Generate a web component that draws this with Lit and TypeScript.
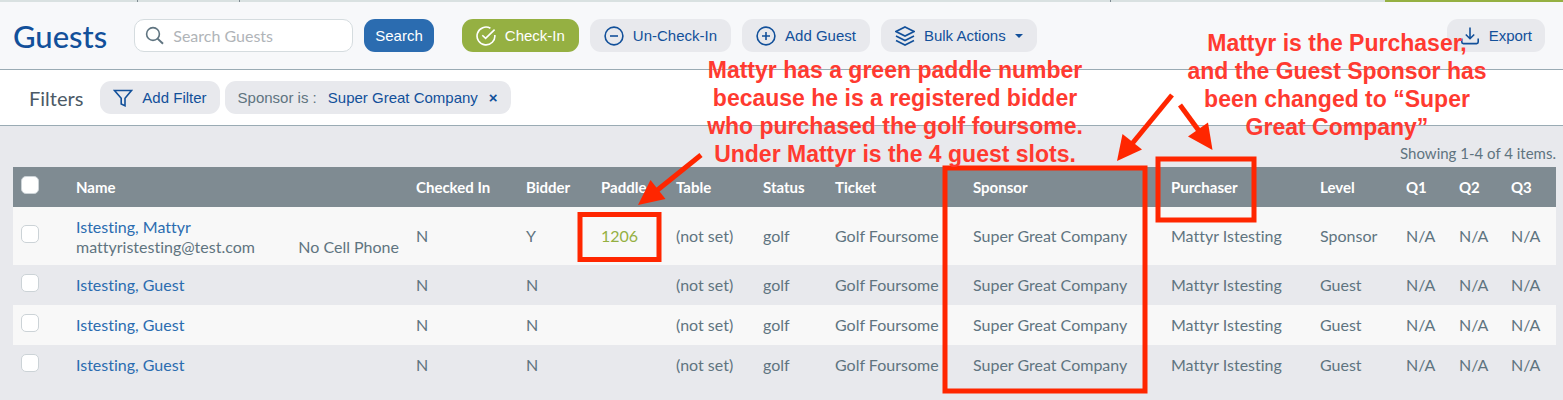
import { LitElement, html, css, svg } from "lit";
import { customElement, state } from "lit/decorators.js";

interface Column {
  label: string;
  width: number;
}

interface Guest {
  name: string;
  email?: string;
  phone?: string;
  bidder: string;
  paddle: string;
  level: string;
}

const COLUMNS: Column[] = [
  { label: "Name", width: 340 },
  { label: "Checked In", width: 110 },
  { label: "Bidder", width: 75 },
  { label: "Paddle", width: 75 },
  { label: "Table", width: 87 },
  { label: "Status", width: 72 },
  { label: "Ticket", width: 138 },
  { label: "Sponsor", width: 198 },
  { label: "Purchaser", width: 149 },
  { label: "Level", width: 86 },
  { label: "Q1", width: 53 },
  { label: "Q2", width: 52 },
  { label: "Q3", width: 53 },
];

const GUESTS: Guest[] = [
  {
    name: "Istesting, Mattyr",
    email: "mattyristesting@test.com",
    phone: "No Cell Phone",
    bidder: "Y",
    paddle: "1206",
    level: "Sponsor",
  },
  { name: "Istesting, Guest", bidder: "N", paddle: "", level: "Guest" },
  { name: "Istesting, Guest", bidder: "N", paddle: "", level: "Guest" },
  { name: "Istesting, Guest", bidder: "N", paddle: "", level: "Guest" },
];

const ICONS = {
  search: svg`<circle cx="8" cy="8" r="6.4" /><path d="M12.6 12.6 18 17.8" stroke-width="2" />`,
  check: svg`<path d="M18.8 9A8.9 8.9 0 1 1 14.4 2.3" /><path d="M6.3 9.2 9.6 12.4 18.6 3.6" />`,
  minus: svg`<circle cx="10" cy="10" r="8.9" /><path d="M6 10h8" />`,
  plus: svg`<circle cx="10" cy="10" r="8.9" /><path d="M6 10h8M10 6v8" />`,
  layers: svg`<path d="M10 1 19 5.5 10 10 1 5.5Z" /><path d="M1 10 10 14.5 19 10" /><path d="M1 14.5 10 19 19 14.5" />`,
  funnel: svg`<path d="M1.5 2.5h17L12 10.3v7.5L8.2 16v-5.7Z" />`,
  download: svg`<path d="M10 1.5v11M5.8 8.5 10 12.7 14.2 8.5M1.8 12.5V16a1.6 1.6 0 0 0 1.6 1.6h13.2a1.6 1.6 0 0 0 1.6-1.6v-3.5" />`,
};

@customElement("app-root")
export class AppRoot extends LitElement {
  static styles = css`
    :host {
      display: block;
      position: relative;
      min-height: 100vh;
      overflow: hidden;
      background: #e8e9ed;
      color: #5f7480;
      font: 16px/20px Lato, sans-serif;
      font-variant-ligatures: none;
    }
    * {
      box-sizing: border-box;
    }
    .strip {
      display: flex;
      height: 2px;
      background: #d9e1e1;
    }
    .tab {
      border-right: 1px solid #7f8b92;
    }
    .tab-a {
      width: 138px;
    }
    .tab-b {
      width: 102px;
    }
    .tab-c {
      width: 871px;
    }
    .tab-active {
      width: 178px;
      margin-left: auto;
      background: #95b042;
    }
    .toolbar {
      display: flex;
      align-items: center;
      height: 68px;
      padding: 0 18px 0 13px;
      background: #f7f8fa;
      border-bottom: 1px solid #9aabb4;
    }
    h1 {
      margin: 0 27px 0 0;
      font-size: 31px;
      line-height: 40px;
      font-weight: 500;
      color: #12509a;
    }
    .icon {
      width: 20px;
      height: 20px;
      flex: none;
      fill: none;
      stroke: currentColor;
      stroke-width: 1.6;
    }
    .search {
      display: flex;
      align-items: center;
      gap: 8px;
      width: 219px;
      height: 33px;
      padding: 0 10px;
      border: 1px solid #d5dcdf;
      border-radius: 10px;
      background: #fff;
    }
    .search input {
      flex: 1;
      min-width: 0;
      padding: 0;
      border: 0;
      outline: 0;
      background: none;
      color: #5f7480;
      font: inherit;
    }
    .search input::placeholder {
      color: #b0b4b8;
      opacity: 1;
    }
    .btn {
      display: flex;
      align-items: center;
      gap: 9px;
      height: 33px;
      padding: 0 13px;
      border: 0;
      border-radius: 11px;
      background: #e8e9ed;
      color: #12509a;
      font: 15px/20px "Liberation Sans", Arial, sans-serif;
      white-space: nowrap;
    }
    .btn-primary {
      margin-left: 11px;
      padding: 0 11px;
      background: #2b6cb0;
      color: #fff;
    }
    .btn-green {
      background: #95b042;
      color: #fff;
    }
    .actions {
      display: flex;
      gap: 11px;
      margin-left: 28px;
    }
    .actions .btn {
      padding: 0 14px;
    }
    .chip {
      gap: 11px;
    }
    .export {
      margin-left: auto;
    }
    .caret {
      border: 4px solid transparent;
      border-top-color: currentColor;
      border-bottom: 0;
    }
    .filters {
      display: flex;
      align-items: center;
      gap: 5px;
      height: 56px;
      padding: 0 29px;
      background: #fff;
      border-bottom: 1px solid #9aabb4;
    }
    h2 {
      margin: 0 12px 0 0;
      font-size: 20px;
      line-height: 24px;
      font-weight: 400;
      color: #4b5a66;
    }
    .chip-label {
      color: #5f7480;
    }
    .chip-remove {
      font-weight: 700;
    }
    .summary {
      margin: 0;
      padding: 17px 7px 4px;
      font-size: 15px;
      text-align: right;
    }
    .grid {
      padding: 0 7px 0 13px;
    }
    table {
      width: 100%;
      table-layout: fixed;
      border-collapse: collapse;
    }
    th,
    td {
      height: 40px;
      padding: 0 0 0 8px;
      text-align: left;
      vertical-align: middle;
      white-space: nowrap;
    }
    thead tr {
      background: #7f8b92;
      color: #fff;
    }
    th {
      font-weight: 700;
      font-size: 15px;
    }
    tbody tr:nth-child(odd) {
      background: #f8f8f8;
    }
    tbody tr:first-child td {
      height: 58px;
    }
    .name {
      padding-top: 10px;
      vertical-align: top;
    }
    .check {
      width: 55px;
      padding-bottom: 5px;
    }
    .check input {
      display: block;
      appearance: none;
      width: 18px;
      height: 18px;
      margin: 0;
      border: 1px solid #ccd3d7;
      border-radius: 5px;
      background: #fff;
    }
    .check input:checked {
      background: #2b6cb0;
    }
    .contact {
      display: flex;
      justify-content: space-between;
      padding-right: 9px;
    }
    a {
      color: #2b6cb0;
      text-decoration: none;
    }
    .paddle {
      color: #95b042;
    }
    .notes {
      position: absolute;
      top: 0;
      left: 0;
      pointer-events: none;
    }
    .note {
      position: absolute;
      margin: 0;
      color: #ff3a30;
      font: 700 23px/28px "Liberation Sans", Arial, sans-serif;
      text-align: center;
      white-space: nowrap;
    }
    .note-paddle {
      top: 56px;
      left: 695px;
      width: 400px;
    }
    .note-sponsor {
      top: 29px;
      left: 1137px;
      width: 400px;
    }
    .marks {
      display: block;
      fill: #ff2600;
      stroke: #ff2600;
    }
    .marks rect {
      fill: none;
      stroke-width: 5;
    }
    .marks line {
      stroke-width: 5;
    }
    .marks polygon {
      stroke: none;
    }
  `;

  @state() private query = "";

  private icon(name: keyof typeof ICONS) {
    return html`<svg class="icon" viewBox="0 0 20 20" aria-hidden="true">${ICONS[name]}</svg>`;
  }

  private onQuery(e: Event) {
    this.query = (e.target as HTMLInputElement).value;
  }

  private row(g: Guest) {
    return html`<tr>
      <td class="check"><input type="checkbox" aria-label=${`Select ${g.name}`} /></td>
      <td class="name">
        <a href="#">${g.name}</a>
        ${g.email
          ? html`<div class="contact"><span>${g.email}</span><span>${g.phone}</span></div>`
          : ""}
      </td>
      <td>N</td>
      <td>${g.bidder}</td>
      <td class="paddle">${g.paddle}</td>
      <td>(not set)</td>
      <td>golf</td>
      <td>Golf Foursome</td>
      <td>Super Great Company</td>
      <td>Mattyr Istesting</td>
      <td>${g.level}</td>
      <td>N/A</td>
      <td>N/A</td>
      <td>N/A</td>
    </tr>`;
  }

  render() {
    return html`
      <div class="strip">
        <span class="tab tab-a"></span>
        <span class="tab tab-b"></span>
        <span class="tab tab-c"></span>
        <span class="tab-active"></span>
      </div>
      <header class="toolbar">
        <h1>Guests</h1>
        <label class="search">
          ${this.icon("search")}
          <input
            type="text"
            aria-label="Search Guests"
            placeholder="Search Guests"
            .value=${this.query}
            @input=${this.onQuery}
          />
        </label>
        <button class="btn btn-primary">Search</button>
        <div class="actions">
          <button class="btn btn-green">${this.icon("check")}Check-In</button>
          <button class="btn">${this.icon("minus")}Un-Check-In</button>
          <button class="btn">${this.icon("plus")}Add Guest</button>
          <button class="btn">${this.icon("layers")}Bulk Actions<span class="caret"></span></button>
        </div>
        <button class="btn export">${this.icon("download")}Export</button>
      </header>
      <section class="filters">
        <h2>Filters</h2>
        <button class="btn">${this.icon("funnel")}Add Filter</button>
        <button class="btn chip" aria-label="Remove filter Sponsor is Super Great Company">
          <span class="chip-label">Sponsor is :</span><span>Super Great Company</span
          ><span class="chip-remove">×</span>
        </button>
      </section>
      <p class="summary">Showing 1-4 of 4 items.</p>
      <main class="grid">
        <table>
          <thead>
            <tr>
              <th class="check"><input type="checkbox" aria-label="Select all guests" /></th>
              ${COLUMNS.map((c) => html`<th style="width:${c.width}px">${c.label}</th>`)}
            </tr>
          </thead>
          <tbody>
            ${GUESTS.map((g) => this.row(g))}
          </tbody>
        </table>
      </main>
      <div class="notes">
        <svg class="marks" width="1563" height="400" viewBox="0 0 1563 400" aria-hidden="true">
          <rect x="580" y="214.5" width="79" height="45" />
          <rect x="945" y="168" width="200" height="223" />
          <rect x="1158" y="159" width="96" height="61" />
          <line x1="701" y1="155" x2="655" y2="192" />
          <polygon points="638,205 650.5,180 665.5,199" />
          <line x1="1172" y1="95" x2="1131" y2="145" />
          <polygon points="1117,161 1122.5,134 1142,149.5" />
          <line x1="1180" y1="105" x2="1202" y2="135" />
          <polygon points="1212.5,150 1188,136.5 1208,122.5" />
        </svg>
        <p class="note note-paddle">
          Mattyr has a green paddle number<br />because he is a registered bidder<br />who purchased
          the golf foursome.<br />Under Mattyr is the 4 guest slots.
        </p>
        <p class="note note-sponsor">
          Mattyr is the Purchaser,<br />and the Guest Sponsor has<br />been changed to “Super<br />Great
          Company”
        </p>
      </div>
    `;
  }
}
